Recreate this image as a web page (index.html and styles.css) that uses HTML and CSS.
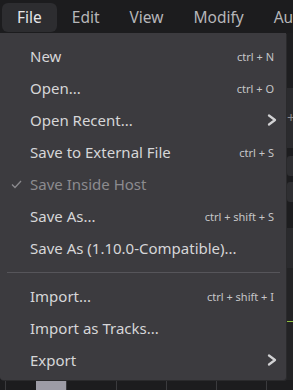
FILE: index.html
```html
<!DOCTYPE html>
<html>
<head>
<meta charset="utf-8">
<link rel="stylesheet" href="styles.css">
</head>
<body>
<div class="app">
  <div class="menubar">
    <div class="tab active">File</div>
    <div class="tab">Edit</div>
    <div class="tab">View</div>
    <div class="tab">Modify</div>
    <div class="tab">Automation</div>
  </div>
  <div class="workspace">
    <div class="side">
      <div class="blk dark1"></div>
      <div class="blk panel"><span class="plus">+</span></div>
      <div class="blk dark2"><div class="btn"></div><div class="btn"></div></div>
      <div class="blk panel2"></div>
      <div class="blk dark3"><div class="green"></div></div>
    </div>
    <div class="timeline">
      <div class="cell first"><div class="thumb"></div></div>
      <div class="cell"></div>
      <div class="cell"></div>
      <div class="cell"></div>
      <div class="cell"></div>
      <div class="cell"></div>
    </div>
  </div>

  <div class="menu">
    <div class="item"><span class="check"></span><span class="label">New</span><span class="sc">ctrl + N</span></div>
    <div class="item"><span class="check"></span><span class="label">Open...</span><span class="sc">ctrl + O</span></div>
    <div class="item"><span class="check"></span><span class="label">Open Recent...</span><svg class="chev" width="10" height="12" viewBox="0 0 10 12"><polyline points="2,1.5 8,6 2,10.5" fill="none" stroke="#d2d2d4" stroke-width="2.2" stroke-linecap="round" stroke-linejoin="round"/></svg></div>
    <div class="item"><span class="check"></span><span class="label">Save to External File</span><span class="sc">ctrl + S</span></div>
    <div class="item disabled"><span class="check"><svg width="11" height="9" viewBox="0 0 11 9"><polyline points="1,4.5 4,7.5 10,1" fill="none" stroke="#8b8a8e" stroke-width="1.3"/></svg></span><span class="label">Save Inside Host</span></div>
    <div class="item"><span class="check"></span><span class="label">Save As...</span><span class="sc">ctrl + shift + S</span></div>
    <div class="item"><span class="check"></span><span class="label">Save As (1.10.0-Compatible)...</span></div>
    <div class="sep"></div>
    <div class="item"><span class="check"></span><span class="label">Import...</span><span class="sc">ctrl + shift + I</span></div>
    <div class="item"><span class="check"></span><span class="label">Import as Tracks...</span></div>
    <div class="item"><span class="check"></span><span class="label">Export</span><svg class="chev" width="10" height="12" viewBox="0 0 10 12"><polyline points="2,1.5 8,6 2,10.5" fill="none" stroke="#d2d2d4" stroke-width="2.2" stroke-linecap="round" stroke-linejoin="round"/></svg></div>
  </div>
</div>
</body>
</html>
```

FILE: styles.css
```css
* { box-sizing: border-box; }
html, body {
  margin: 0;
  padding: 0;
  background: #1c1c1e;
  font-family: "Noto Sans", "Open Sans", sans-serif;
}
.app {
  position: relative;
  width: 293px;
  height: 390px;
  overflow: hidden;
  background: #1c1c1e;
  display: flex;
  flex-direction: column;
}
.menubar {
  height: 33px;
  display: flex;
  align-items: center;
  padding-left: 2px;
  white-space: nowrap;
  flex: none;
}
.tab {
  height: 29px;
  padding: 0 15px;
  display: flex;
  align-items: center;
  font-size: 15.5px;
  color: #b6b6b9;
  border-radius: 6px;
  flex: none;
  margin-top: 1px;
}
.tab.active {
  background: #2d2d30;
  color: #e6e6e8;
}
.workspace {
  flex: 1;
  display: flex;
  flex-direction: column;
}
.side {
  flex: 1;
  display: flex;
  flex-direction: column;
  align-items: flex-end;
}
.blk { width: 7px; position: relative; }
.dark1 { height: 55px; background: #1e1e20; }
.panel { height: 60px; background: #2b2b2e; display: flex; align-items: center; }
.plus { color: #8a8a8e; font-size: 14px; line-height: 1; margin-left: 1px; }
.dark2 { height: 80px; background: #1d1d1f; padding-top: 8px; display: flex; flex-direction: column; gap: 6px; }
.btn { height: 20px; width: 6px; margin-left: 1px; background: #2f2f32; border-radius: 3px 0 0 3px; }
.panel2 { height: 40px; background: #2a2a2d; }
.dark3 { flex: 1; background: #232325; }
.green { position: absolute; left: 0; right: 0; top: 53px; height: 1px; background: #8fbf3f; }
.timeline {
  height: 10px;
  flex: none;
  display: flex;
  padding-left: 5px;
  background: #1c1c1e;
}
.cell {
  width: 50px;
  flex: none;
  border-left: 1px solid #3a3a3d;
  position: relative;
}
.cell.first { width: 61px; }
.thumb {
  position: absolute;
  left: 30px;
  width: 31px;
  top: 0;
  bottom: 0;
  background: #9d9ca6;
  border-right: 1px solid #e0e0e4;
}
.menu {
  position: absolute;
  left: 0;
  top: 33px;
  width: 286px;
  height: 347px;
  background: #3c3b3f;
  border-radius: 0 0 3px 3px;
  box-shadow: 1px 1px 0 #2a2a2c;
  padding: 7px 0 4px 0;
  display: flex;
  flex-direction: column;
}
.item {
  height: 32px;
  display: flex;
  align-items: center;
  padding-right: 12px;
  font-size: 15px;
  color: #d6d6d8;
  white-space: nowrap;
  flex: none;
}
.check {
  width: 30px;
  flex: none;
  display: flex;
  align-items: center;
  justify-content: flex-start;
  padding-left: 11px;
}
.label { flex: 1; }
.sc {
  font-size: 11px;
  color: #c6c6c8;
}
.chev { margin-right: -3px; }
.item.disabled { color: #8c8b8f; }
.sep {
  height: 16px;
  flex: none;
  display: flex;
  align-items: center;
  padding: 0 6px 0 7px;
}
.sep::before {
  content: "";
  flex: 1;
  height: 1px;
  background: #56555a;
}
```
